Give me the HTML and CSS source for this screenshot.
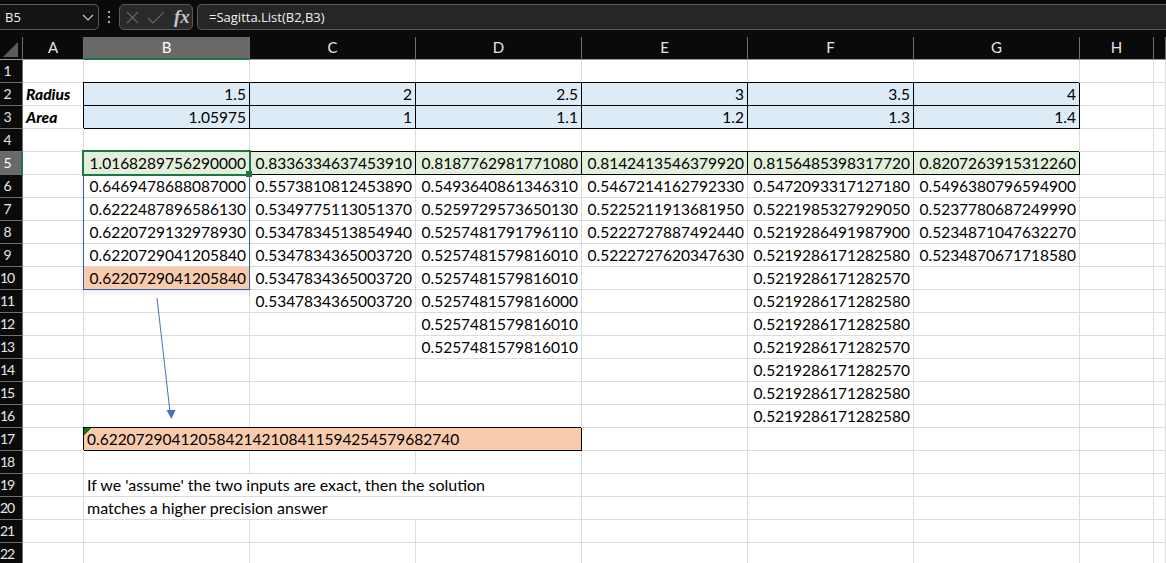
FILE: index.html
```html
<!DOCTYPE html>
<html lang="en">
<head>
<meta charset="utf-8">
<title>Sagitta.List</title>
<link rel="stylesheet" href="styles.css">
</head>
<body>
<header class="bar">
  <div class="namebox"><span>B5</span>
    <svg class="chev" width="12" height="7" viewBox="0 0 12 7"><path d="M1 1l5 5 5-5" fill="none" stroke="#c8c8c8" stroke-width="1.2"/></svg>
  </div>
  <div class="dots"><i></i><i></i><i></i></div>
  <div class="fxgroup">
    <svg width="13" height="13" viewBox="0 0 13 13"><path d="M1 1l11 11M12 1L1 12" fill="none" stroke="#666" stroke-width="1.2"/></svg>
    <svg width="18" height="13" viewBox="0 0 18 13"><path d="M1 7l5 5L17 1" fill="none" stroke="#666" stroke-width="1.2"/></svg>
    <span class="fx">fx</span>
  </div>
  <div class="formula">=Sagitta.List(B2,B3)</div>
</header>
<main class="sheet">
<table class="grid">
<colgroup><col class="c0"><col class="ca"><col class="cw"><col class="cw"><col class="cw"><col class="cw"><col class="cw"><col class="cw"><col class="ch"><col class="ci"></colgroup>
<thead>
<tr><th class="corner"><svg width="16" height="15" viewBox="0 0 16 15"><path d="M15 0v15H0z" fill="#5c5c5c"/></svg></th><th>A</th><th class="sel">B</th><th>C</th><th>D</th><th>E</th><th>F</th><th>G</th><th>H</th><th></th></tr>
</thead>
<tbody>
<tr><th>1</th><td></td><td></td><td></td><td></td><td></td><td></td><td></td><td></td><td></td></tr>
<tr><th>2</th><td class="label">Radius</td><td class="n box blue">1.5</td><td class="n box blue">2</td><td class="n box blue">2.5</td><td class="n box blue">3</td><td class="n box blue">3.5</td><td class="n box blue">4</td><td></td><td></td></tr>
<tr><th>3</th><td class="label">Area</td><td class="n box blue">1.05975</td><td class="n box blue">1</td><td class="n box blue">1.1</td><td class="n box blue">1.2</td><td class="n box blue">1.3</td><td class="n box blue">1.4</td><td></td><td></td></tr>
<tr><th>4</th><td></td><td></td><td></td><td></td><td></td><td></td><td></td><td></td><td></td></tr>
<tr><th class="selrow">5</th><td></td><td class="n box green">1.0168289756290000</td><td class="n box green">0.8336334637453910</td><td class="n box green">0.8187762981771080</td><td class="n box green">0.8142413546379920</td><td class="n box green">0.8156485398317720</td><td class="n box green">0.8207263915312260</td><td></td><td></td></tr>
<tr><th>6</th><td></td><td class="n">0.6469478688087000</td><td class="n">0.5573810812453890</td><td class="n">0.5493640861346310</td><td class="n">0.5467214162792330</td><td class="n">0.5472093317127180</td><td class="n">0.5496380796594900</td><td></td><td></td></tr>
<tr><th>7</th><td></td><td class="n">0.6222487896586130</td><td class="n">0.5349775113051370</td><td class="n">0.5259729573650130</td><td class="n">0.5225211913681950</td><td class="n">0.5221985327929050</td><td class="n">0.5237780687249990</td><td></td><td></td></tr>
<tr><th>8</th><td></td><td class="n">0.6220729132978930</td><td class="n">0.5347834513854940</td><td class="n">0.5257481791796110</td><td class="n">0.5222727887492440</td><td class="n">0.5219286491987900</td><td class="n">0.5234871047632270</td><td></td><td></td></tr>
<tr><th>9</th><td></td><td class="n">0.6220729041205840</td><td class="n">0.5347834365003720</td><td class="n">0.5257481579816010</td><td class="n">0.5222727620347630</td><td class="n">0.5219286171282580</td><td class="n">0.5234870671718580</td><td></td><td></td></tr>
<tr><th>10</th><td></td><td class="n orange">0.6220729041205840</td><td class="n">0.5347834365003720</td><td class="n">0.5257481579816010</td><td></td><td class="n">0.5219286171282570</td><td></td><td></td><td></td></tr>
<tr><th>11</th><td></td><td></td><td class="n">0.5347834365003720</td><td class="n">0.5257481579816000</td><td></td><td class="n">0.5219286171282580</td><td></td><td></td><td></td></tr>
<tr><th>12</th><td></td><td></td><td></td><td class="n">0.5257481579816010</td><td></td><td class="n">0.5219286171282580</td><td></td><td></td><td></td></tr>
<tr><th>13</th><td></td><td></td><td></td><td class="n">0.5257481579816010</td><td></td><td class="n">0.5219286171282570</td><td></td><td></td><td></td></tr>
<tr><th>14</th><td></td><td></td><td></td><td></td><td></td><td class="n">0.5219286171282570</td><td></td><td></td><td></td></tr>
<tr><th>15</th><td></td><td></td><td></td><td></td><td></td><td class="n">0.5219286171282580</td><td></td><td></td><td></td></tr>
<tr><th>16</th><td></td><td></td><td></td><td></td><td></td><td class="n">0.5219286171282580</td><td></td><td></td><td></td></tr>
<tr><th>17</th><td></td><td colspan="3" class="t box orange flag">0.6220729041205842142108411594254579682740</td><td></td><td></td><td></td><td></td><td></td></tr>
<tr><th>18</th><td></td><td></td><td></td><td></td><td></td><td></td><td></td><td></td><td></td></tr>
<tr><th>19</th><td></td><td colspan="3" class="t prose">If we 'assume' the two inputs are exact, then the solution</td><td></td><td></td><td></td><td></td><td></td></tr>
<tr><th>20</th><td></td><td colspan="3" class="t prose">matches a higher precision answer</td><td></td><td></td><td></td><td></td><td></td></tr>
<tr><th>21</th><td></td><td></td><td></td><td></td><td></td><td></td><td></td><td></td><td></td></tr>
<tr><th>22</th><td></td><td></td><td></td><td></td><td></td><td></td><td></td><td></td><td></td></tr>
</tbody>
</table>
<div class="range"></div>
<div class="cursor"><i class="handle"></i></div>
<svg class="arrow" width="30" height="130" viewBox="0 0 30 130"><path d="M7 1L20 115" fill="none" stroke="#4472c4" stroke-width="1"/><path d="M16.500 113h9l-4 9z" fill="#4472c4"/></svg>
</main>
</body>
</html>
```
FILE: styles.css
```css
html, body {
  margin: 0;
  height: 563px;
  overflow: hidden;
  background: #0a0a0a;
}
body {
  width: 1166px;
  font-family: "Lato", "Liberation Sans", sans-serif;
}
.bar {
  display: flex;
  align-items: flex-start;
  height: 37px;
  box-sizing: border-box;
  padding-top: 4px;
  background: #0a0a0a;
  color: #f0f0f0;
  font-family: "Open Sans", sans-serif;
  font-size: 13px;
}
.namebox, .fxgroup, .formula {
  height: 26px;
  box-sizing: border-box;
  border: 1px solid #5a5a5a;
  border-radius: 5px;
  display: flex;
  align-items: center;
}
.namebox {
  width: 99px;
  padding: 0 4px 0 5px;
  justify-content: space-between;
  background: #141414;
  border-left: 0;
  border-radius: 0 5px 5px 0;
}
.dots {
  width: 20px;
  height: 26px;
  display: flex;
  flex-direction: column;
  align-items: center;
  justify-content: center;
  gap: 3px;
}
.dots i {
  width: 2px;
  height: 2px;
  background: #a8a8a8;
}
.fxgroup {
  width: 74px;
  padding-left: 6px;
  gap: 8px;
  background: #2a2a2a;
}
.fx {
  font: italic 700 19px "Liberation Serif", serif;
  color: #c4c4c4;
  margin-left: 1px;
}
.formula {
  flex: 1;
  margin-left: 4px;
  padding-left: 11px;
  background: #262626;
  border-right: 0;
  border-radius: 5px 0 0 5px;
}
.sheet {
  position: relative;
  background: #fff;
}
.grid {
  table-layout: fixed;
  width: 1166px;
  border-collapse: separate;
  border-spacing: 0;
  font-size: 15.500px;
  color: #000;
}
.c0 { width: 23px; }
.ca { width: 61px; }
.cw { width: 166px; }
.ch { width: 74px; }
.ci { width: 12px; }
.grid tr { height: 23px; }
.grid th, .grid td {
  box-sizing: border-box;
  height: 23px;
  padding: 0;
  line-height: 22px;
  white-space: nowrap;
}
.grid td {
  border-right: 1px solid #dcdcdc;
  border-bottom: 1px solid #dcdcdc;
}
.grid th {
  background: #0a0a0a;
  color: #e6e6e6;
  font-family: "Lato", sans-serif;
  font-size: 15px;
  font-weight: 400;
  text-align: center;
  border-right: 1px solid #6e6e6e;
  border-bottom: 1px solid #6e6e6e;
  overflow: hidden;
}
.grid tbody th {
  font-size: 14px;
  letter-spacing: -1px;
  padding-right: 8px;
}
.grid thead th { border-bottom-color: #9a9a9a; line-height: 20px; padding-bottom: 2px; }
.grid th.corner { text-align: right; padding: 3px 3px 0 0; line-height: 0; }
.grid th.sel {
  background: #696969;
  color: #fff;
  padding-bottom: 1px;
  border-bottom: 2px solid #217346;
}
.grid th.selrow {
  background: #696969;
  color: #fff;
  padding-right: 7px;
  border-right: 2px solid #217346;
}
.n { text-align: right; padding-right: 3px !important; }
.t { text-align: left; padding-left: 3px !important; }
.prose { font-size: 16px; }
.label {
  padding-left: 3px !important;
  font-weight: 900;
  font-style: italic;
  font-size: 15.500px;
}
.box {
  box-shadow: -1px -1px 0 #000;
}
.grid td.box {
  border-right-color: #000;
  border-bottom-color: #000;
}
.blue { background: #ddebf7; }
.green { background: #e2efda; }
.orange { background: #f8cbad; }
.flag {
  background-image: linear-gradient(135deg, #0e7a0d 0 50%, transparent 50%);
  background-size: 8px 8px;
  background-repeat: no-repeat;
}
.range {
  position: absolute;
  left: 83px;
  top: 138px;
  width: 167px;
  height: 115px;
  box-sizing: border-box;
  border: 1px solid #2f5da8;
  border-top: 0;
  box-shadow: 0 3px 6px rgba(0, 0, 0, 0.08);
}
.cursor {
  position: absolute;
  left: 82px;
  top: 113px;
  width: 169px;
  height: 26px;
  box-sizing: border-box;
  border: 2px solid #217346;
}
.handle {
  position: absolute;
  right: -3px;
  bottom: -3px;
  width: 6px;
  height: 6px;
  background: #217346;
}
.arrow {
  position: absolute;
  left: 150px;
  top: 260px;
}
```
